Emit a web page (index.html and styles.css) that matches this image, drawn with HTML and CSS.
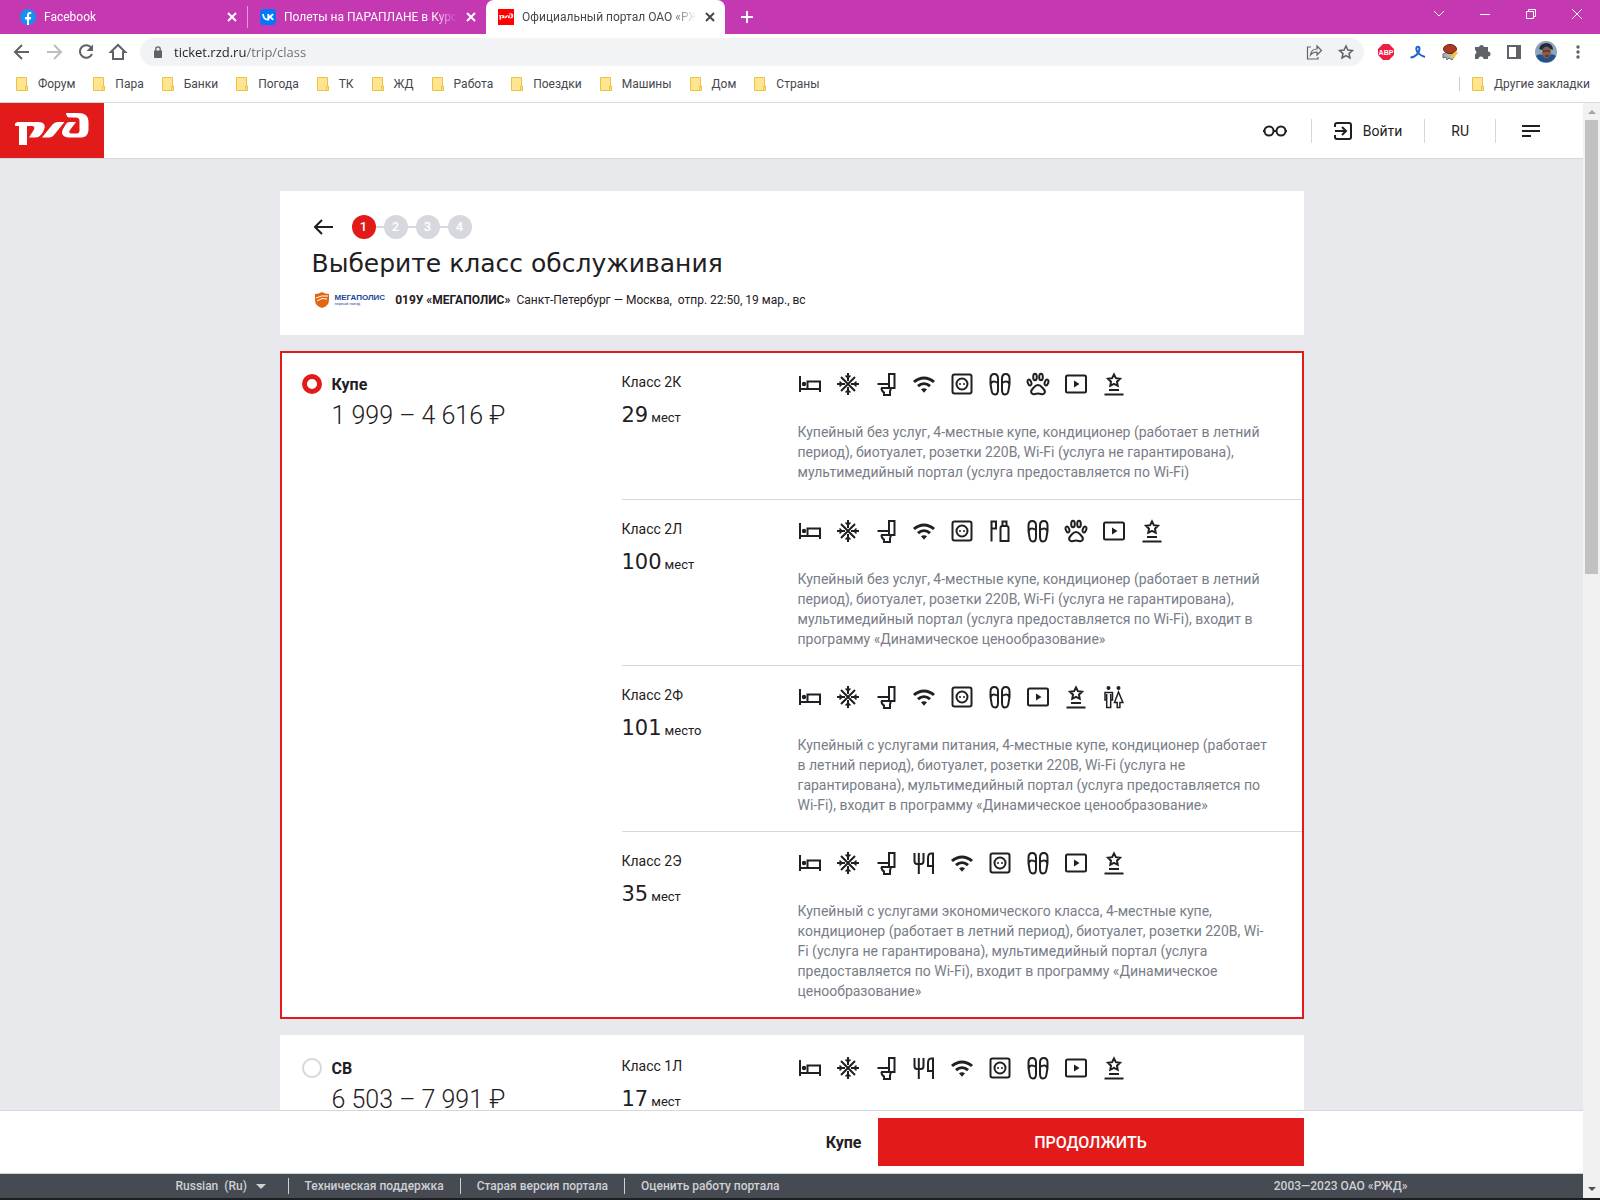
FILE: index.html
```html
<!DOCTYPE html>
<html lang="ru">
<head>
    <meta charset="UTF-8">
    <meta name="viewport" content="width=device-width, initial-scale=1.0">
    <title>Официальный портал ОАО «РЖД»</title>
    <link rel="stylesheet" href="styles.css">
</head>
<body>
    <!-- Icon set -->
    <svg class="sprite" aria-hidden="true">
        <symbol id="i-bed" viewBox="0 0 24 24">
            <path d="M2 4v16M2 17h20M9.500 16.500v-7H22V20"/><circle class="fill" cx="6" cy="12" r="2.200"/>
        </symbol>
        <symbol id="i-snow" viewBox="0 0 24 24">
            <path d="M12 1v8M12 15v8M1 12h8M15 12h8M5 5l14 14M19 5L5 19"/><path class="thin" d="M9.500 3.500L12 6l2.500-2.500M9.500 20.500L12 18l2.500 2.500M3.500 9.500L6 12l-2.500 2.500M20.500 9.500L18 12l2.500 2.500"/>
        </symbol>
        <symbol id="i-wc" viewBox="0 0 24 24">
            <path d="M15 2h5.500v14H15zM3.500 12H15M7 16h8M7.500 16c0 3 1.500 4 2.500 4.500V23h6v-3.500l1-3.500"/>
        </symbol>
        <symbol id="i-wifi" viewBox="0 0 24 24">
            <path class="thick" d="M2 10c6-5.500 14-5.500 20 0M6 14.200c3.600-3.200 8.400-3.200 12 0"/><path class="fill" d="M9 17.200q3-1.800 6 0l-3 3.600z"/>
        </symbol>
        <symbol id="i-socket" viewBox="0 0 24 24">
            <rect x="2.500" y="2.500" width="19" height="19" rx="2"/><circle cx="12" cy="12" r="5.500"/><circle class="fill" cx="10" cy="12" r="1"/><circle class="fill" cx="14" cy="12" r="1"/>
        </symbol>
        <symbol id="i-slippers" viewBox="0 0 24 24">
            <path d="M2.500 12V6.500c0-6 7.500-6 7.500 0V18c0 6-6 6-6.500 0zM14 12V6.500c0-6 7.500-6 7.500 0V12l-1 6c-.5 6-6.500 6-6.500 0zM2.500 13.500C3 9 6 8.500 10 11M14 11c4-2.500 7-2 7.500 2.500"/>
        </symbol>
        <symbol id="i-paw" viewBox="0 0 24 24">
            <path d="M12 13c3 0 3.500 2 5.500 4 3 3 .5 6-2.500 5-2-.7-4-.7-6 0-3 1-5.500-2-2.500-5 2-2 2.500-4 5.500-4z"/><ellipse cx="9" cy="5" rx="1.800" ry="3.300"/><ellipse cx="15" cy="5" rx="1.800" ry="3.300"/><ellipse cx="3.500" cy="10.500" rx="1.700" ry="3" transform="rotate(-20 3.500 10.500)"/><ellipse cx="20.500" cy="10.500" rx="1.700" ry="3" transform="rotate(20 20.500 10.500)"/>
        </symbol>
        <symbol id="i-video" viewBox="0 0 24 24">
            <rect x="2" y="3.500" width="20" height="17" rx="1.500"/><path class="fill" d="M10 8.500l5.500 3.500-5.500 3.500z"/>
        </symbol>
        <symbol id="i-star" viewBox="0 0 24 24">
            <path d="M12 2.500l1.900 3.700 4.100.6-3 2.900.7 4.100-3.700-1.900-3.700 1.900.7-4.100-3-2.900 4.100-.6zM7 18h10M2.500 22.500h19"/>
        </symbol>
        <symbol id="i-hygiene" viewBox="0 0 24 24">
            <path d="M3.500 22.500V2.500H8v7H4M12.500 9c0-1.500 1-2 2-2h4c1 0 2 .5 2 2v13h-8zM14.500 7V2.500h4V7"/>
        </symbol>
        <symbol id="i-people" viewBox="0 0 24 24">
            <circle class="fill" cx="6.500" cy="3" r="2"/><circle class="fill" cx="16.500" cy="3" r="2"/><path class="thin" d="M4.500 15H3V7.500h7.500V15H9M4.700 9v13.500h4V9M16.500 7l-4 10.500h2.700v5h2.700v-5h3z"/>
        </symbol>
        <symbol id="i-food" viewBox="0 0 24 24">
            <path d="M2.500 2v8c0 2 1 3 2.500 3h4c1.500 0 2.500-1 2.500-3V2M6.800 2v21M21 23V2.500h-2c-2 0-3 2-3 5V15h5"/>
        </symbol>
        <symbol id="i-folder" viewBox="0 0 12 14">
            <path d="M.5.500h10v8.500h1v4.500H.500z" fill="#ffe591" stroke="#e8c441"/><path d="M9.500 13.500v-4h2" fill="none" stroke="#e8c441"/>
        </symbol>
        <symbol id="i-close" viewBox="0 0 12 12">
            <path d="M2 2l8 8M10 2l-8 8" fill="none" stroke="currentColor" stroke-width="2"/>
        </symbol>
        <symbol id="i-rzd" viewBox="0 0 104 55">
            <path fill="#fff" d="M15 20.500q1-1.500 3-1.500h20c6 0 8 3.500 6 7.500L43 29q-3 5.500-8 5.500h-6l5-8c1-2 0-3.500-2-3.500h-5V42h-8V23h-4zM42 34.500l10.500-13q2-2.500 5-2.500h7L54 32q-2 2.500-5 2.500zM67 10h11c7 0 10.500 3 10.500 9v7c0 6-3 8.500-8 8.500H69c-6 0-8.500-4-6-8.500l3-5q1-2 4-2h6l-6 8c-1.500 2-.5 3.500 1.500 3.500h5c2 0 3-1 3-3V18c0-2.500-1.500-3.500-4-3.500h-6q-3 0-3.500-4.500z"/>
        </symbol>
    </svg>

    <!-- Browser window -->
    <div class="tabs">
        <div class="tab">
            <svg class="favicon" viewBox="0 0 16 16"><circle cx="8" cy="8" r="8" fill="#1292f4"/><path fill="#fff" d="M7 16v-5.500H5V8h2V6.500C7 4 8.200 3 10 3h1.200v2h-1c-.8 0-1.200.4-1.200 1.200V8h2.200l-.4 2.500H9V16z"/></svg>
            <span class="tab-title">Facebook</span>
            <button class="tab-close" aria-label="Закрыть"><svg><use href="#i-close"/></svg></button>
        </div>
        <div class="tab tab-split">
            <svg class="favicon" viewBox="0 0 16 16"><rect width="16" height="16" rx="4" fill="#07f"/><path d="M3 5q.5 5.500 4.500 5.500h.8V5M13 5q-1 2-4.500 3Q12 8.500 13 11" fill="none" stroke="#fff" stroke-width="1.800"/></svg>
            <span class="tab-title">Полеты на ПАРАПЛАНЕ в Курск</span>
            <button class="tab-close" aria-label="Закрыть"><svg><use href="#i-close"/></svg></button>
        </div>
        <div class="tab tab-active">
            <svg class="favicon" viewBox="0 0 16 16"><path fill="#f00" d="M0 0h16v16H0z"/><svg x="-1" y="3" width="18" height="10" viewBox="6 4 92 48"><use href="#i-rzd" width="104" height="55"/></svg></svg>
            <span class="tab-title">Официальный портал ОАО «РЖ</span>
            <button class="tab-close" aria-label="Закрыть"><svg><use href="#i-close"/></svg></button>
        </div>
        <button class="tab-new" aria-label="Новая вкладка"><svg viewBox="0 0 12 12"><path d="M6 0v12M0 6h12" stroke="#fff" stroke-width="2"/></svg></button>
        <div class="window-buttons">
            <button aria-label="Вкладки"><svg viewBox="0 0 12 12"><path d="M1 3l5 5 5-5"/></svg></button>
            <button aria-label="Свернуть"><svg viewBox="0 0 12 12"><path d="M1 6.500h10"/></svg></button>
            <button aria-label="Развернуть"><svg viewBox="0 0 12 12"><path d="M1.500 3.500h7v7h-7zM3.500 3.500v-2h7v7h-2"/></svg></button>
            <button aria-label="Закрыть окно"><svg viewBox="0 0 12 12"><path d="M1 1l10 10M11 1L1 11"/></svg></button>
        </div>
    </div>

    <div class="toolbar">
        <button aria-label="Назад"><svg viewBox="0 0 24 24"><path d="M19 12H6M12 5l-7 7 7 7" fill="none" stroke="#5f6368" stroke-width="2"/></svg></button>
        <button aria-label="Вперёд"><svg viewBox="0 0 24 24"><path d="M5 12h13M12 5l7 7-7 7" fill="none" stroke="#bcbec1" stroke-width="2"/></svg></button>
        <button aria-label="Обновить"><svg viewBox="0 0 24 24"><path d="M17.500 8A6.300 6.300 0 1 0 18 14" fill="none" stroke="#5f6368" stroke-width="2"/><path d="M19 4.500V11h-6.500z" fill="#5f6368"/></svg></button>
        <button aria-label="Домой"><svg viewBox="0 0 24 24"><path d="M4.800 12L12 5l7.200 7H17v7H7v-7z" fill="none" stroke="#5f6368" stroke-width="2"/></svg></button>
        <div class="omnibox">
            <svg class="lock" viewBox="0 0 8 12"><path fill="#5f6368" d="M0 4.500h8V11q0 1-1 1H1q-1 0-1-1z"/><path d="M1.800 5V3a2.200 2.200 0 0 1 4.400 0v2" fill="none" stroke="#5f6368" stroke-width="1.300"/></svg>
            <input class="address" type="text" value="ticket.rzd.ru/trip/class" aria-label="Адрес">
            <button aria-label="Поделиться"><svg viewBox="0 0 24 24"><path d="M9 7H5.500v12H16v-2M8.500 15c.5-4 3-6 6.500-6V6l4.500 4.500L15 15v-3c-3 0-5 1-6.500 3z" fill="none" stroke="#5f6368" stroke-width="1.200"/></svg></button>
            <button aria-label="В закладки"><svg viewBox="0 0 24 24"><path d="M12 6l1.900 4.100 4.500.5-3.400 3 1 4.400-4-2.300L8 18l1-4.400-3.400-3 4.500-.5z" fill="none" stroke="#5f6368" stroke-width="1.500"/></svg></button>
        </div>
        <button aria-label="Adblock Plus"><svg viewBox="0 0 24 24"><path fill="#ed1e45" d="M9 4h6l5 5v6l-5 5H9l-5-5V9z"/><text class="abp" x="12" y="15" text-anchor="middle">ABP</text></svg></button>
        <button aria-label="Лента"><svg viewBox="0 0 24 24"><path d="M4.500 17.500c5 0 9-5 9-8.500 0-3-3.500-3-3.200 0 .4 4 4.200 6.500 8.700 8" fill="none" stroke="#1b66c9" stroke-width="2"/></svg></button>
        <button aria-label="Расширение"><svg viewBox="0 0 24 24"><path fill="#aab4bc" stroke="#63686e" d="M5 14l5-2 7 3-3 5-3-2-2 2-1-3-3 1z"/><ellipse cx="12" cy="9" rx="6.500" ry="4.500" fill="#a93b20" stroke="#6b2413"/><path d="M13 18l6-6" stroke="#f1c832" stroke-width="3"/></svg></button>
        <button aria-label="Расширения"><svg viewBox="0 0 24 24"><path fill="#5f6368" d="M5 7h4a2.600 2.600 0 0 1 5 0h4v4.500a2.500 2.500 0 0 1 0 5V19h-4.500a2.500 2.500 0 0 0-5 0H5v-4.500a2.500 2.500 0 0 0 0-4.500z"/></svg></button>
        <button aria-label="Боковая панель"><svg viewBox="0 0 24 24"><path fill="#5f6368" d="M5 5h14v14H5z"/><path fill="#fff" d="M7 7h7v10H7z"/></svg></button>
        <button aria-label="Профиль"><svg class="avatar" viewBox="0 0 24 24"><circle cx="12" cy="12" r="11" fill="#8da5b8"/><path fill="#23538f" d="M2 16q4-4 10 1 6-5 10-1a11 11 0 0 1-20 0z"/><path fill="#222b3c" d="M5 9q1-6 8-6 6 1 6 7l-3-1-8 1z"/><ellipse cx="12.500" cy="12.500" rx="4.500" ry="6" fill="#89594c"/><path d="M9 11h7M11 16h4" stroke="#35272b"/></svg></button>
        <button aria-label="Меню"><svg viewBox="0 0 24 24" fill="#5f6368"><circle cx="12" cy="7" r="1.700"/><circle cx="12" cy="12" r="1.700"/><circle cx="12" cy="17" r="1.700"/></svg></button>
    </div>

    <nav class="bookmarks">
        <a href="#"><svg><use href="#i-folder"/></svg>Форум</a>
        <a href="#"><svg><use href="#i-folder"/></svg>Пара</a>
        <a href="#"><svg><use href="#i-folder"/></svg>Банки</a>
        <a href="#"><svg><use href="#i-folder"/></svg>Погода</a>
        <a href="#"><svg><use href="#i-folder"/></svg>ТК</a>
        <a href="#"><svg><use href="#i-folder"/></svg>ЖД</a>
        <a href="#"><svg><use href="#i-folder"/></svg>Работа</a>
        <a href="#"><svg><use href="#i-folder"/></svg>Поездки</a>
        <a href="#"><svg><use href="#i-folder"/></svg>Машины</a>
        <a href="#"><svg><use href="#i-folder"/></svg>Дом</a>
        <a href="#"><svg><use href="#i-folder"/></svg>Страны</a>
        <a href="#" class="bookmarks-other"><svg><use href="#i-folder"/></svg>Другие закладки</a>
    </nav>

    <div class="window">
        <div class="page">
            <header class="header">
                <a href="#" class="logo" aria-label="РЖД"><svg><use href="#i-rzd"/></svg></a>
                <div class="header-menu">
                    <button aria-label="Версия для слабовидящих"><svg class="glasses" viewBox="0 0 24 24"><circle cx="6" cy="12" r="4.500"/><circle cx="18" cy="12" r="4.500"/><path d="M10.500 12h3M0 12h2M22 12h2"/></svg></button>
                    <a href="#"><svg class="login" viewBox="0 0 18 18"><path d="M1 5V3q0-2 2-2h12q2 0 2 2v12q0 2-2 2H3q-2 0-2-2v-2M1 9h10M8 5l4 4-4 4"/></svg>Войти</a>
                    <button>RU</button>
                    <button aria-label="Меню сайта"><svg class="burger" viewBox="0 0 18 12"><path d="M0 1h18M0 6h18M0 11h9"/></svg></button>
                </div>
            </header>

            <main class="content">
                <section class="card intro">
                    <div class="steps">
                        <button class="back" aria-label="Назад"><svg viewBox="0 0 20 16"><path d="M19 8H2M8 1L1 8l7 7"/></svg></button>
                        <ol>
                            <li class="current">1</li>
                            <li>2</li>
                            <li>3</li>
                            <li>4</li>
                        </ol>
                    </div>
                    <h1>Выберите класс обслуживания</h1>
                    <div class="train">
                        <svg class="brand-shield" viewBox="0 0 14 16"><path fill="#e2660f" d="M0 2q4 0 7-2 3 2 7 2v6q0 6-7 8-7-2-7-8z"/><path d="M1 6q5-3 12-2M2 9q5-4 10-2" fill="none" stroke="#fff"/></svg>
                        <div class="brand"><b>МЕГАПОЛИС</b><small>первый поезд</small></div>
                        <strong>019У «МЕГАПОЛИС»</strong>
                        <span>Санкт-Петербург — Москва,</span>
                        <span>отпр. 22:50, 19 мар., вс</span>
                    </div>
                </section>

                <section class="card offer selected">
                    <div class="kind">
                        <input type="radio" name="kind" id="kupe" checked>
                        <label for="kupe">Купе</label>
                        <p class="price">1 999 – 4 616 ₽</p>
                    </div>
                    <div class="classes">
                        <article class="class">
                            <div><h2>Класс 2К</h2><p class="seats"><b>29</b> мест</p></div>
                            <div>
                                <div class="icons">
                                    <svg><use href="#i-bed"/></svg>
                                    <svg><use href="#i-snow"/></svg>
                                    <svg><use href="#i-wc"/></svg>
                                    <svg><use href="#i-wifi"/></svg>
                                    <svg><use href="#i-socket"/></svg>
                                    <svg><use href="#i-slippers"/></svg>
                                    <svg><use href="#i-paw"/></svg>
                                    <svg><use href="#i-video"/></svg>
                                    <svg><use href="#i-star"/></svg>
                                </div>
                                <p class="about">Купейный без услуг, 4-местные купе, кондиционер (работает в летний период), биотуалет, розетки 220В, Wi-Fi (услуга не гарантирована), мультимедийный портал (услуга предоставляется по Wi-Fi)</p>
                            </div>
                        </article>
                        <article class="class">
                            <div><h2>Класс 2Л</h2><p class="seats"><b>100</b> мест</p></div>
                            <div>
                                <div class="icons">
                                    <svg><use href="#i-bed"/></svg>
                                    <svg><use href="#i-snow"/></svg>
                                    <svg><use href="#i-wc"/></svg>
                                    <svg><use href="#i-wifi"/></svg>
                                    <svg><use href="#i-socket"/></svg>
                                    <svg><use href="#i-hygiene"/></svg>
                                    <svg><use href="#i-slippers"/></svg>
                                    <svg><use href="#i-paw"/></svg>
                                    <svg><use href="#i-video"/></svg>
                                    <svg><use href="#i-star"/></svg>
                                </div>
                                <p class="about">Купейный без услуг, 4-местные купе, кондиционер (работает в летний период), биотуалет, розетки 220В, Wi-Fi (услуга не гарантирована), мультимедийный портал (услуга предоставляется по Wi-Fi), входит в программу «Динамическое ценообразование»</p>
                            </div>
                        </article>
                        <article class="class">
                            <div><h2>Класс 2Ф</h2><p class="seats"><b>101</b> место</p></div>
                            <div>
                                <div class="icons">
                                    <svg><use href="#i-bed"/></svg>
                                    <svg><use href="#i-snow"/></svg>
                                    <svg><use href="#i-wc"/></svg>
                                    <svg><use href="#i-wifi"/></svg>
                                    <svg><use href="#i-socket"/></svg>
                                    <svg><use href="#i-slippers"/></svg>
                                    <svg><use href="#i-video"/></svg>
                                    <svg><use href="#i-star"/></svg>
                                    <svg><use href="#i-people"/></svg>
                                </div>
                                <p class="about">Купейный с услугами питания, 4-местные купе, кондиционер (работает в летний период), биотуалет, розетки 220В, Wi-Fi (услуга не гарантирована), мультимедийный портал (услуга предоставляется по Wi-Fi), входит в программу «Динамическое ценообразование»</p>
                            </div>
                        </article>
                        <article class="class">
                            <div><h2>Класс 2Э</h2><p class="seats"><b>35</b> мест</p></div>
                            <div>
                                <div class="icons">
                                    <svg><use href="#i-bed"/></svg>
                                    <svg><use href="#i-snow"/></svg>
                                    <svg><use href="#i-wc"/></svg>
                                    <svg><use href="#i-food"/></svg>
                                    <svg><use href="#i-wifi"/></svg>
                                    <svg><use href="#i-socket"/></svg>
                                    <svg><use href="#i-slippers"/></svg>
                                    <svg><use href="#i-video"/></svg>
                                    <svg><use href="#i-star"/></svg>
                                </div>
                                <p class="about">Купейный с услугами экономического класса, 4-местные купе, кондиционер (работает в летний период), биотуалет, розетки 220В, Wi-Fi (услуга не гарантирована), мультимедийный портал (услуга предоставляется по Wi-Fi), входит в программу «Динамическое ценообразование»</p>
                            </div>
                        </article>
                    </div>
                </section>

                <section class="card offer">
                    <div class="kind">
                        <input type="radio" name="kind" id="sv">
                        <label for="sv">СВ</label>
                        <p class="price">6 503 – 7 991 ₽</p>
                    </div>
                    <div class="classes">
                        <article class="class">
                            <div><h2>Класс 1Л</h2><p class="seats"><b>17</b> мест</p></div>
                            <div>
                                <div class="icons">
                                    <svg><use href="#i-bed"/></svg>
                                    <svg><use href="#i-snow"/></svg>
                                    <svg><use href="#i-wc"/></svg>
                                    <svg><use href="#i-food"/></svg>
                                    <svg><use href="#i-wifi"/></svg>
                                    <svg><use href="#i-socket"/></svg>
                                    <svg><use href="#i-slippers"/></svg>
                                    <svg><use href="#i-video"/></svg>
                                    <svg><use href="#i-star"/></svg>
                                </div>
                            </div>
                        </article>
                    </div>
                </section>
            </main>

            <div class="order">
                <div class="order-inner">
                    <strong>Купе</strong>
                    <button class="continue">ПРОДОЛЖИТЬ</button>
                </div>
            </div>

            <footer class="footer">
                <div class="footer-inner">
                    <div class="lang">
                        <select aria-label="Язык"><option>Russian&nbsp; (Ru)</option></select>
                    </div>
                    <a href="#">Техническая поддержка</a>
                    <a href="#">Старая версия портала</a>
                    <a href="#">Оценить работу портала</a>
                    <span class="copyright">2003—2023 ОАО «РЖД»</span>
                </div>
            </footer>
        </div>
        <div class="scrollbar">
            <svg viewBox="0 0 8 4"><path fill="#a3a3a3" d="M0 4l4-4 4 4z"/></svg>
            <div class="thumb"></div>
            <svg viewBox="0 0 8 4"><path fill="#505050" d="M0 0h8L4 4z"/></svg>
        </div>
    </div>
</body>
</html>
```

FILE: styles.css
```css
* {
    box-sizing: border-box;
    margin: 0;
    padding: 0;
}

body {
    display: flex;
    flex-direction: column;
    height: 100vh;
    overflow: hidden;
    border-bottom: 2px solid #1d1e20;
    background: #fff;
    color: #1f2023;
    font-family: Roboto, "Noto Sans", sans-serif;
    font-size: 14px;
}

button {
    border: none;
    background: none;
    color: inherit;
    font: inherit;
    cursor: pointer;
}

a {
    color: inherit;
    text-decoration: none;
}

svg {
    display: block;
    flex: none;
}

.sprite {
    position: absolute;
    width: 0;
    height: 0;
}

/* Browser */
.tabs {
    display: flex;
    height: 34px;
    padding-left: 8px;
    background: #c438b2;
    color: #fff;
    font-size: 12px;
}

.tab {
    display: flex;
    align-items: center;
    gap: 8px;
    width: 239px;
    padding: 0 9px 0 12px;
}

.tab-split {
    border-left: 1px solid #e39bd9;
    border-image: linear-gradient(transparent 7px, #e39bd9 7px, #e39bd9 27px, transparent 27px) 1;
}

.tab-active {
    border-radius: 8px 8px 0 0;
    background: #fff;
    color: #45484d;
}

.favicon {
    width: 16px;
    height: 16px;
}

.tab-title {
    flex: 1;
    overflow: hidden;
    white-space: nowrap;
    -webkit-mask-image: linear-gradient(to left, transparent, #000 24px);
    mask-image: linear-gradient(to left, transparent, #000 24px);
}

.tab-close svg,
.tab-new svg {
    width: 12px;
    height: 12px;
}

.tab-new {
    padding: 0 16px;
}

.window-buttons {
    display: flex;
    height: 28px;
    margin-left: auto;
}

.window-buttons button {
    width: 46px;
}

.window-buttons svg {
    width: 12px;
    height: 12px;
    margin: 0 auto;
    fill: none;
    stroke: #fff;
}

.toolbar {
    display: flex;
    align-items: center;
    gap: 8px;
    height: 36px;
    padding: 0 10px;
}

.toolbar svg {
    width: 24px;
    height: 24px;
}

.omnibox {
    display: flex;
    flex: 1;
    align-items: center;
    gap: 8px;
    height: 28px;
    margin: 0 2px;
    padding: 0 6px 0 14px;
    border-radius: 14px;
    background: #f1f3f4;
}

.omnibox .lock {
    width: 8px;
    height: 12px;
}

.address {
    flex: 1;
    margin-left: 4px;
    border: none;
    outline: none;
    background: linear-gradient(to right, #202124 72px, #686c71 72px);
    -webkit-background-clip: text;
    background-clip: text;
    color: transparent;
    font: 13px "Open Sans", sans-serif;
}

.abp {
    fill: #fff;
    font: bold 7px "Liberation Sans", sans-serif;
}

.bookmarks {
    display: flex;
    align-items: center;
    gap: 18px;
    height: 33px;
    padding: 0 10px 5px 16px;
    border-bottom: 1px solid #d8dade;
    color: #45484d;
    font-size: 12px;
}

.bookmarks a {
    display: flex;
    align-items: center;
    gap: 10px;
}

.bookmarks svg {
    width: 12px;
    height: 14px;
}

.bookmarks .bookmarks-other {
    margin-left: auto;
    padding-left: 12px;
    border-left: 1px solid #c9cbcf;
}

.window {
    display: flex;
    flex: 1;
    min-height: 0;
}

.page {
    display: flex;
    flex: 1;
    flex-direction: column;
}

.scrollbar {
    display: flex;
    flex-direction: column;
    align-items: center;
    width: 17px;
    padding: 7px 0;
    background: #f1f1f1;
}

.scrollbar svg {
    width: 8px;
    height: 4px;
}

.thumb {
    width: 13px;
    height: 42%;
    margin: 6px 0 auto;
    background: #c1c1c1;
}

/* Site header */
.header {
    display: flex;
    height: 56px;
    border-bottom: 1px solid #d7d8de;
}

.logo {
    width: 104px;
    background: #e21a1a;
}

.logo svg {
    width: 104px;
    height: 55px;
}

.header-menu {
    display: flex;
    align-items: center;
    margin-left: auto;
    padding-right: 17px;
}

.header-menu > * {
    display: flex;
    align-items: center;
    gap: 11px;
    height: 24px;
    padding: 0 26px;
}

.header-menu > *:first-child {
    padding: 0 24px;
}

.header-menu > * + * {
    border-left: 1px solid #d7d8de;
}

.header-menu a {
    padding: 0 22px;
}

.header-menu svg {
    fill: none;
    stroke: #1f2023;
    stroke-width: 2;
}

.glasses {
    width: 24px;
    height: 24px;
}

.login {
    width: 18px;
    height: 18px;
}

.burger {
    width: 18px;
    height: 12px;
}

/* Content */
.content {
    flex: 1;
    min-height: 0;
    padding: 32px 16px 0;
    overflow: hidden;
    background: #e8e9ed;
}

.card {
    max-width: 1024px;
    margin: 0 auto 16px;
    background: #fff;
}

.intro {
    padding: 24px 32px;
}

.steps {
    display: flex;
    align-items: center;
    gap: 18px;
    padding-left: 2px;
}

.back svg {
    width: 20px;
    height: 16px;
    fill: none;
    stroke: #1f2023;
    stroke-width: 2;
}

.steps ol {
    display: flex;
    gap: 8px;
    list-style: none;
    background: linear-gradient(#d7d8de, #d7d8de) center / 100% 2px no-repeat;
}

.steps li {
    width: 24px;
    border-radius: 50%;
    background: #d7d8de;
    color: #fff;
    font-size: 13px;
    font-weight: 500;
    line-height: 24px;
    text-align: center;
}

.steps .current {
    background: #e21a1a;
}

h1 {
    margin: 9px 0 8px;
    font: 25px/32px "DejaVu Sans", sans-serif;
}

.train {
    display: flex;
    align-items: center;
    gap: 6px;
    height: 23px;
    padding-left: 3px;
    font-size: 12px;
}

.brand-shield {
    width: 14px;
    height: 16px;
}

.brand {
    margin-right: 4px;
    color: #1d479b;
    font-family: "Liberation Sans", sans-serif;
}

.brand b {
    display: block;
    font-size: 8px;
    line-height: 8px;
}

.brand small {
    display: block;
    font-size: 4px;
    line-height: 4px;
}

.offer {
    display: grid;
    grid-template-columns: 1fr 2fr;
    border: 2px solid #fff;
}

.selected {
    border-color: #e21a1a;
}

.kind {
    display: grid;
    grid-template-columns: 20px 1fr;
    align-content: start;
    gap: 6px 10px;
    padding: 21px 20px 0;
}

.kind input {
    appearance: none;
    width: 20px;
    height: 20px;
    border: 2px solid #d7d8de;
    border-radius: 50%;
}

.kind input:checked {
    border: 5px solid #e21a1a;
}

.kind label {
    font-size: 16px;
    font-weight: bold;
    line-height: 22px;
}

.price {
    grid-column: 2;
    font-size: 25px;
    font-weight: 300;
    line-height: 28px;
}

.class {
    display: grid;
    grid-template-columns: 176px 1fr;
    padding: 19px 30px 16px 0;
}

.class:first-child {
    padding-bottom: 17px;
}

.class + .class {
    border-top: 1px solid #d7d8de;
}

h2 {
    font-size: 14px;
    font-weight: normal;
    line-height: 20px;
}

.seats {
    display: flex;
    align-items: baseline;
    gap: 3px;
    margin-top: 9px;
    font-size: 13px;
    line-height: 28px;
}

.seats b {
    font: 21px/28px "DejaVu Sans", sans-serif;
}

.icons {
    display: flex;
    gap: 14px;
}

.icons svg {
    width: 24px;
    height: 24px;
    color: #1f2023;
}

symbol {
    fill: none;
    stroke: currentColor;
    stroke-width: 2;
}

symbol .fill {
    fill: currentColor;
    stroke: none;
}

symbol .thick {
    stroke-width: 3;
}

symbol .thin {
    stroke-width: 1.5;
}

#i-rzd {
    stroke: none;
}

#i-folder {
    stroke-width: 1;
}

.about {
    margin-top: 26px;
    color: #787d87;
    line-height: 20px;
}

/* Order bar and footer */
.order {
    padding: 7px 16px;
    border-top: 1px solid #d7d8de;
    background: #fff;
}

.order-inner {
    display: flex;
    align-items: center;
    justify-content: flex-end;
    gap: 16px;
    max-width: 1024px;
    margin: 0 auto;
    font-size: 16px;
}

.continue {
    width: 426px;
    height: 48px;
    background: #e21a1a;
    color: #fff;
    font-weight: 500;
}

.footer {
    border-top: 1px solid #c5d5cf;
    background: #464a53;
    color: #cfd0d3;
    font-size: 12px;
    font-weight: 500;
}

.footer-inner {
    display: flex;
    align-items: center;
    max-width: 1232px;
    height: 24px;
    margin: 0 auto;
}

.footer a {
    padding: 0 16px;
    border-left: 1px solid #cfd0d3;
    line-height: 16px;
}

.lang {
    display: flex;
    align-items: center;
    gap: 8px;
    padding-right: 22px;
}

.lang::after {
    border: 5px solid transparent;
    border-top-color: #cfd0d3;
    border-bottom: none;
    content: "";
}

.lang select {
    appearance: none;
    border: none;
    background: none;
    color: inherit;
    font: inherit;
}

.copyright {
    margin-left: auto;
}
```
